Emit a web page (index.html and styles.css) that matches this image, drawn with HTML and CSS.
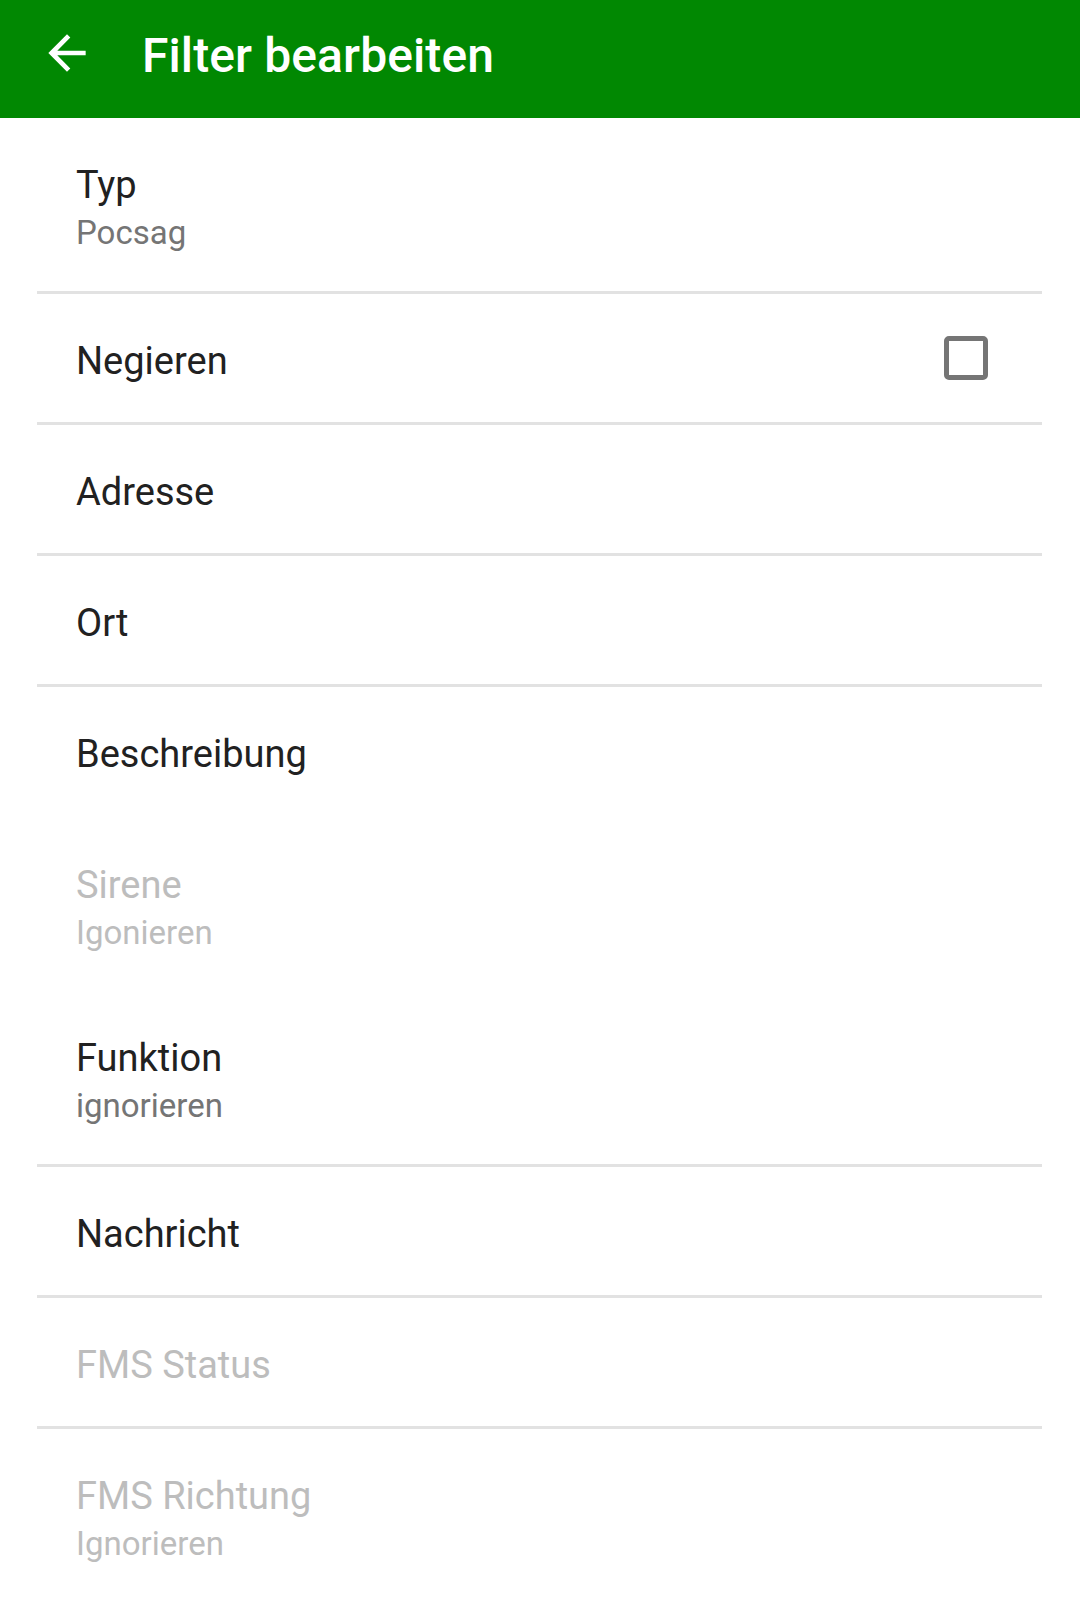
FILE: index.html
```html
<!DOCTYPE html>
<html lang="de">
<head>
<meta charset="utf-8">
<title>Filter bearbeiten</title>
<link rel="stylesheet" href="styles.css">
</head>
<body>
<header class="toolbar">
  <svg class="back" viewBox="0 0 24 24" aria-hidden="true"><path d="M20 11H7.83l5.59-5.59L12 4l-8 8 8 8 1.41-1.41L7.83 13H20v-2z"/></svg>
  <h1 class="toolbar-title">Filter bearbeiten</h1>
</header>
<main class="list">
  <div class="pref divided">
    <div class="pref-text">
      <div class="pref-title">Typ</div>
      <div class="pref-summary">Pocsag</div>
    </div>
  </div>
  <div class="pref divided">
    <div class="pref-text">
      <div class="pref-title">Negieren</div>
    </div>
    <span class="checkbox"></span>
  </div>
  <div class="pref divided">
    <div class="pref-text"><div class="pref-title">Adresse</div></div>
  </div>
  <div class="pref divided">
    <div class="pref-text"><div class="pref-title">Ort</div></div>
  </div>
  <div class="pref hidden-divider">
    <div class="pref-text"><div class="pref-title">Beschreibung</div></div>
  </div>
  <div class="pref disabled">
    <div class="pref-text">
      <div class="pref-title">Sirene</div>
      <div class="pref-summary">Igonieren</div>
    </div>
  </div>
  <div class="pref divided">
    <div class="pref-text">
      <div class="pref-title">Funktion</div>
      <div class="pref-summary">ignorieren</div>
    </div>
  </div>
  <div class="pref divided">
    <div class="pref-text"><div class="pref-title">Nachricht</div></div>
  </div>
  <div class="pref divided disabled">
    <div class="pref-text"><div class="pref-title">FMS Status</div></div>
  </div>
  <div class="pref disabled">
    <div class="pref-text">
      <div class="pref-title">FMS Richtung</div>
      <div class="pref-summary">Ignorieren</div>
    </div>
  </div>
</main>
</body>
</html>
```
FILE: styles.css
```css
html, body {
  margin: 0;
  padding: 0;
  background: #ffffff;
}
body {
  font-family: Roboto, "Noto Sans", "Liberation Sans", sans-serif;
  width: 1080px;
  height: 1601px;
  overflow: hidden;
}
.toolbar {
  display: flex;
  align-items: flex-start;
  height: 118px;
  background: #018802;
  color: #ffffff;
}
.back {
  width: 56px;
  height: 56px;
  margin-left: 39px;
  margin-top: 25px;
  fill: #ffffff;
  flex: none;
}
.toolbar-title {
  margin: 0 0 0 47px;
  padding-top: 28px;
  font-size: 48px;
  line-height: 56px;
  font-weight: 500;
  letter-spacing: 0.1px;
}
.list {
  margin: 0 38px 0 37px;
}
.pref {
  display: flex;
  align-items: center;
  justify-content: space-between;
}
.pref.divided {
  border-bottom: 3px solid #e2e2e2;
}
.pref.hidden-divider {
  border-bottom: 3px solid transparent;
}
.pref-text {
  padding: 44px 0 38px 39px;
}
.pref-title {
  font-size: 38px;
  line-height: 46px;
  color: #212121;
}
.pref-summary {
  margin-top: 5px;
  font-size: 33px;
  line-height: 40px;
  color: #757575;
}
.pref.disabled .pref-title,
.pref.disabled .pref-summary {
  color: #bdbdbd;
}
.checkbox {
  box-sizing: border-box;
  width: 44px;
  height: 44px;
  border: 5px solid #757575;
  border-radius: 5px;
  margin-right: 54px;
}
```
